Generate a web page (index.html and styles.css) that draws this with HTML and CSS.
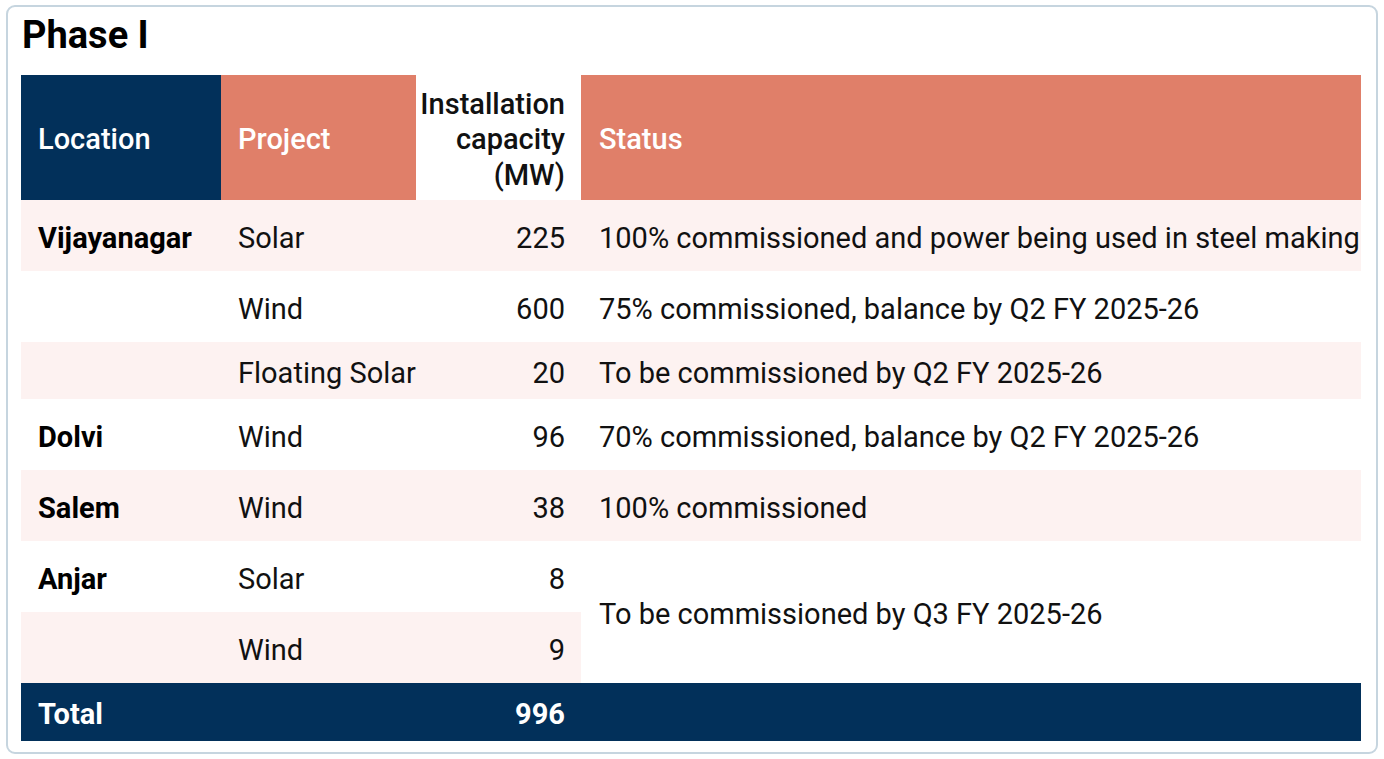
FILE: index.html
```html
<!DOCTYPE html>
<html lang="en">
<head>
<meta charset="utf-8">
<title>Phase I</title>
<link rel="stylesheet" href="styles.css">
</head>
<body>
<div class="card">
  <h1 class="title">Phase I</h1>
  <table class="grid">
    <colgroup>
      <col class="c-loc"><col class="c-proj"><col class="c-cap"><col class="c-status">
    </colgroup>
    <thead>
      <tr class="head">
        <th class="h-navy">Location</th>
        <th class="h-salmon">Project</th>
        <th class="h-white num">Installation<br>capacity<br>(MW)</th>
        <th class="h-salmon st">Status</th>
      </tr>
    </thead>
    <tbody>
      <tr class="row pink">
        <td class="loc">Vijayanagar</td><td>Solar</td><td class="num">225</td><td class="st">100% commissioned and power being used in steel making</td>
      </tr>
      <tr class="row">
        <td class="loc"></td><td>Wind</td><td class="num">600</td><td class="st">75% commissioned, balance by Q2 FY 2025-26</td>
      </tr>
      <tr class="row short pink">
        <td class="loc"></td><td>Floating Solar</td><td class="num">20</td><td class="st">To be commissioned by Q2 FY 2025-26</td>
      </tr>
      <tr class="row">
        <td class="loc">Dolvi</td><td>Wind</td><td class="num">96</td><td class="st">70% commissioned, balance by Q2 FY 2025-26</td>
      </tr>
      <tr class="row pink">
        <td class="loc">Salem</td><td>Wind</td><td class="num">38</td><td class="st">100% commissioned</td>
      </tr>
      <tr class="row">
        <td class="loc">Anjar</td><td>Solar</td><td class="num">8</td><td rowspan="2" class="st span">To be commissioned by Q3 FY 2025-26</td>
      </tr>
      <tr class="row pink">
        <td class="loc"></td><td>Wind</td><td class="num">9</td>
      </tr>
    </tbody>
    <tfoot>
      <tr class="total">
        <td>Total</td><td></td><td class="num">996</td><td class="st"></td>
      </tr>
    </tfoot>
  </table>
</div>
</body>
</html>
```
FILE: styles.css
```css
html, body {
  margin: 0;
  padding: 0;
  background: #ffffff;
}
body {
  font-family: Roboto, "Liberation Sans", sans-serif;
  color: #111111;
}
.card {
  margin: 5px 0 0 6px;
  width: 1372px;
  height: 749px;
  box-sizing: border-box;
  border: 2px solid #c6d5df;
  border-radius: 9px;
  padding: 0 15px 0 13px;
}
.title {
  margin: 0;
  height: 68px;
  font-size: 38px;
  font-weight: 700;
  line-height: 56px;
  padding-left: 1px;
  color: #000;
}
.grid {
  border-collapse: collapse;
  table-layout: fixed;
  width: 1340px;
  font-size: 29px;
}
.c-loc { width: 200px; }
.c-proj { width: 195px; }
.c-cap { width: 165px; }
.c-status { width: 780px; }
.grid th, .grid td {
  padding: 0 16px 0 17px;
  text-align: left;
  vertical-align: middle;
  white-space: nowrap;
}
.grid .st {
  padding-left: 18px;
  padding-right: 0;
}
.head { height: 125px; }
.head th {
  font-weight: 500;
  color: #ffffff;
  line-height: 35.5px;
  padding-top: 5px;
}
.head th.h-white {
  padding-left: 0;
  color: #111;
}
.h-navy { background: #02305a; }
.h-salmon { background: #e07f69; }
.h-white { background: #ffffff; }
.num { text-align: right !important; }
.row { height: 71px; }
.row.short { height: 57px; }
.pink td { background: #fdf2f1; }
.row td { font-weight: 400; padding-top: 4px; }
.row td.loc { font-weight: 700; color: #000; }
.pink td.span, .row td.span { background: #ffffff; }
.total { height: 58px; background: #02305a; }
.total td {
  color: #ffffff;
  font-weight: 700;
  padding-top: 4px;
}
```
